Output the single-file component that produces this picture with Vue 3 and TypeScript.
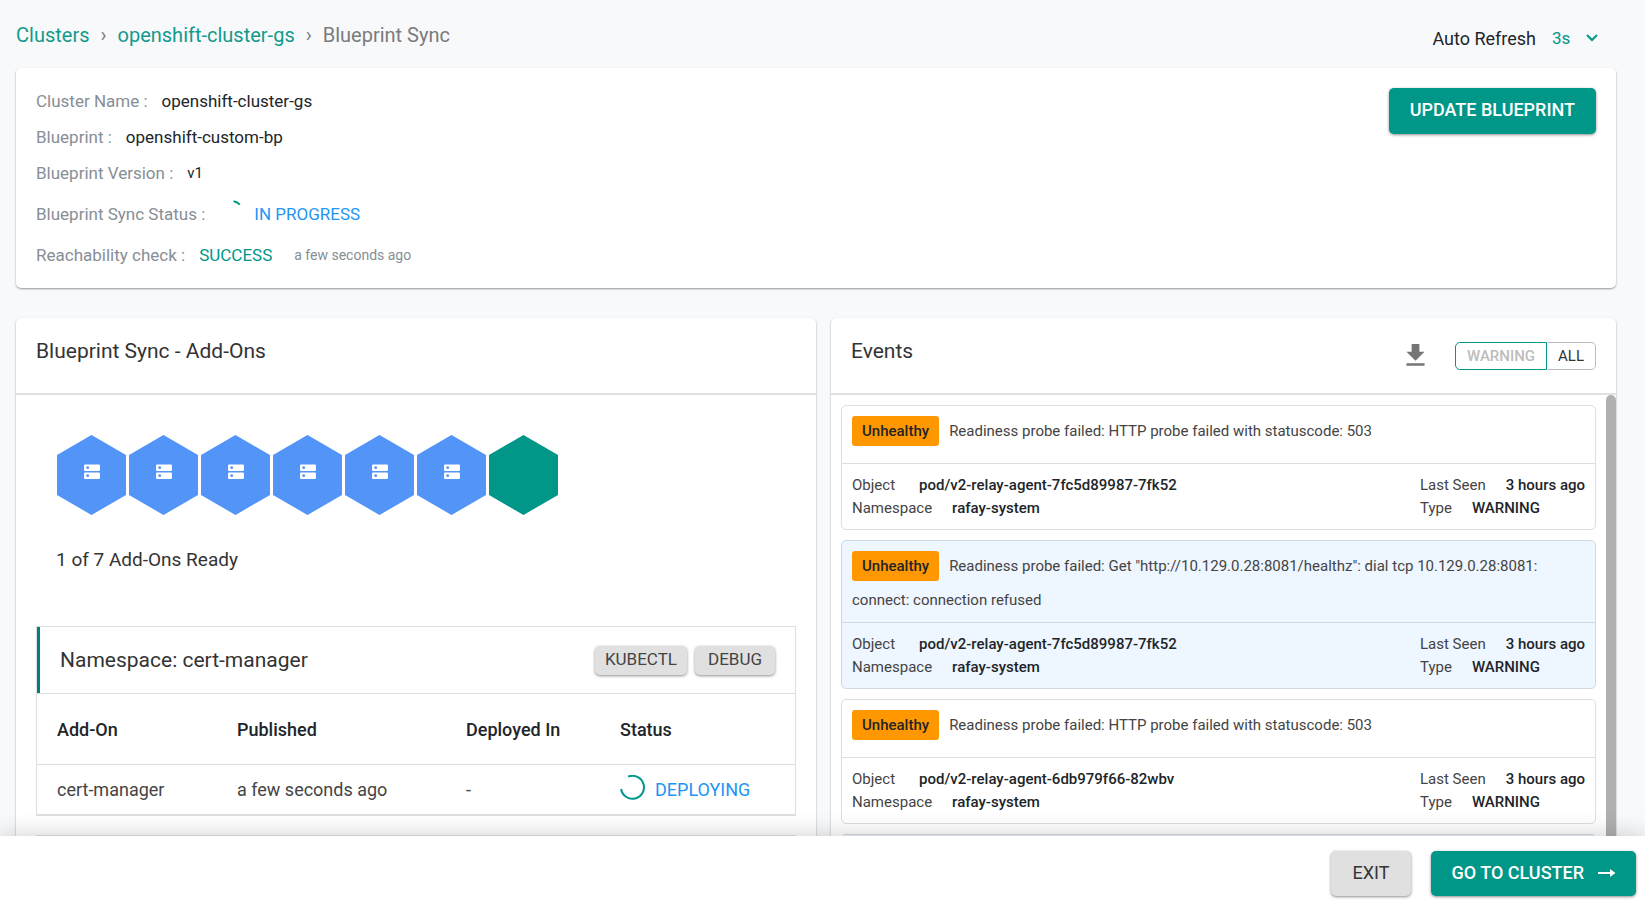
<script setup lang="ts">
import { ref } from 'vue'

interface EventItem {
  reason: string
  message: string
  object: string
  namespace: string
  lastSeen: string
  type: string
}

interface AddOn {
  name: string
  published: string
  deployedIn: string
  status: string
}

const refresh = ref('3s')
const filter = ref<'warning' | 'all'>('warning')

const hexagons: boolean[] = [false, false, false, false, false, false, true]

const addOns: AddOn[] = [
  { name: 'cert-manager', published: 'a few seconds ago', deployedIn: '-', status: 'DEPLOYING' },
]

const probe503 = 'Readiness probe failed: HTTP probe failed with statuscode: 503'
const probeRefused =
  'Readiness probe failed: Get "http://10.129.0.28:8081/healthz": dial tcp 10.129.0.28:8081: connect: connection refused'

const base = { reason: 'Unhealthy', namespace: 'rafay-system', lastSeen: '3 hours ago', type: 'WARNING' }
const events: EventItem[] = [
  { ...base, message: probe503, object: 'pod/v2-relay-agent-7fc5d89987-7fk52' },
  { ...base, message: probeRefused, object: 'pod/v2-relay-agent-7fc5d89987-7fk52' },
  { ...base, message: probe503, object: 'pod/v2-relay-agent-6db979f66-82wbv' },
]
</script>

<template>
  <div class="page">
    <main class="content">
      <header class="topbar">
        <nav class="crumbs" aria-label="Breadcrumb">
          <a href="#clusters">Clusters</a>
          <span class="sep">›</span>
          <a href="#cluster">openshift-cluster-gs</a>
          <span class="sep">›</span>
          <span>Blueprint Sync</span>
        </nav>
        <div class="refresh">
          <label for="refresh">Auto Refresh</label>
          <div class="select">
            <select id="refresh" v-model="refresh">
              <option>3s</option>
              <option>5s</option>
              <option>10s</option>
            </select>
            <svg class="chevron" viewBox="0 0 12 8" aria-hidden="true">
              <path d="M1 1l5 5 5-5" fill="none" stroke="currentColor" stroke-width="2" />
            </svg>
          </div>
        </div>
      </header>

      <section class="card summary">
        <dl class="facts">
          <div class="fact"><dt>Cluster Name :</dt><dd>openshift-cluster-gs</dd></div>
          <div class="fact"><dt>Blueprint :</dt><dd>openshift-custom-bp</dd></div>
          <div class="fact"><dt>Blueprint Version :</dt><dd class="version">v1</dd></div>
          <div class="fact tall">
            <dt>Blueprint Sync Status :</dt>
            <dd class="status">
              <svg class="spinner" viewBox="0 0 25 25" aria-hidden="true">
                <path d="M14.6 1.2A11.5 11.5 0 0 1 20.8 4.6" />
              </svg>
              <span>IN PROGRESS</span>
            </dd>
          </div>
          <div class="fact">
            <dt>Reachability check :</dt>
            <dd class="success">SUCCESS</dd>
            <dd class="ago">a few seconds ago</dd>
          </div>
        </dl>
        <button type="button" class="btn primary">UPDATE BLUEPRINT</button>
      </section>

      <div class="columns">
        <section class="card panel">
          <header class="panel-head"><h2>Blueprint Sync - Add-Ons</h2></header>
          <div class="addons">
            <div class="hexes">
              <svg v-for="(ready, i) in hexagons" :key="i" class="hex" :class="{ ready }" viewBox="0 0 69 80" aria-hidden="true">
                <path d="M34.5 0L69 20v40L34.5 80 0 60V20z" />
                <g v-if="!ready">
                  <rect class="bar" x="27" y="29.5" width="16" height="6.5" rx="1" />
                  <rect class="bar" x="27" y="37.5" width="16" height="6.5" rx="1" />
                  <circle cx="30.7" cy="32.7" r="1.4" />
                  <circle cx="30.7" cy="40.7" r="1.4" />
                </g>
              </svg>
            </div>
            <p class="ready-text">1 of 7 Add-Ons Ready</p>

            <div class="ns">
              <div class="ns-head">
                <h3>Namespace: cert-manager</h3>
                <div class="ns-actions">
                  <button type="button" class="btn small">KUBECTL</button>
                  <button type="button" class="btn small">DEBUG</button>
                </div>
              </div>
              <table>
                <colgroup><col class="c1" /><col class="c2" /><col class="c3" /><col /></colgroup>
                <thead>
                  <tr><th>Add-On</th><th>Published</th><th>Deployed In</th><th>Status</th></tr>
                </thead>
                <tbody>
                  <tr v-for="a in addOns" :key="a.name">
                    <td>{{ a.name }}</td>
                    <td>{{ a.published }}</td>
                    <td>{{ a.deployedIn }}</td>
                    <td>
                      <div class="status">
                        <svg class="spinner" viewBox="0 0 25 25" aria-hidden="true">
                          <path d="M8.2 1.6A11.5 11.5 0 1 1 1.1 14" />
                        </svg>
                        <span>{{ a.status }}</span>
                      </div>
                    </td>
                  </tr>
                </tbody>
              </table>
            </div>
            <div class="ns next"></div>
          </div>
        </section>

        <section class="card panel">
          <header class="panel-head">
            <h2>Events</h2>
            <div class="tools">
              <button type="button" class="download" aria-label="Download events">
                <svg viewBox="0 0 24 24" aria-hidden="true">
                  <path d="M19 9h-4V3H9v6H5l7 7 7-7zM5 18v2h14v-2H5z" />
                </svg>
              </button>
              <div class="toggle" role="group" aria-label="Event filter">
                <button type="button" :class="{ on: filter === 'warning' }" @click="filter = 'warning'">WARNING</button>
                <button type="button" :class="{ on: filter === 'all' }" @click="filter = 'all'">ALL</button>
              </div>
            </div>
          </header>
          <div class="events">
            <div class="list">
              <article v-for="(e, i) in events" :key="i" class="event">
                <p class="message"><span class="tag">{{ e.reason }}</span>{{ e.message }}</p>
                <div class="meta">
                  <dl>
                    <div class="pair"><dt class="wide">Object</dt><dd>{{ e.object }}</dd></div>
                    <div class="pair"><dt>Namespace</dt><dd>{{ e.namespace }}</dd></div>
                  </dl>
                  <dl>
                    <div class="pair"><dt>Last Seen</dt><dd>{{ e.lastSeen }}</dd></div>
                    <div class="pair"><dt>Type</dt><dd>{{ e.type }}</dd></div>
                  </dl>
                </div>
              </article>
              <div class="event next"></div>
            </div>
            <div class="track"><div class="thumb"></div></div>
          </div>
        </section>
      </div>
    </main>

    <footer class="footer">
      <button type="button" class="btn exit">EXIT</button>
      <button type="button" class="btn primary go">
        <span>GO TO CLUSTER</span>
        <svg viewBox="0 0 18 10" aria-hidden="true">
          <path d="M0 4.1h12V1l5.5 4L12 9V5.9H0z" />
        </svg>
      </button>
    </footer>
  </div>
</template>

<style>
body {
  margin: 0;
  background: #f8f9fb;
}
</style>

<style scoped>
* {
  box-sizing: border-box;
}
h2,
h3,
p,
dl,
dd {
  margin: 0;
}
button,
select {
  font: inherit;
  color: inherit;
}
.page {
  display: flex;
  flex-direction: column;
  height: 100vh;
  overflow: hidden;
  font-family: Roboto, 'Liberation Sans', sans-serif;
  font-size: 18px;
  color: #212529;
}
.content {
  flex: 1;
  min-height: 0;
  display: flex;
  flex-direction: column;
  padding: 0 29px 0 16px;
  overflow: hidden;
}
.topbar {
  display: flex;
  justify-content: space-between;
  flex: none;
  height: 68px;
}
.crumbs {
  display: flex;
  align-items: center;
  height: 70px;
  gap: 11px;
  font-size: 20px;
  color: #7b7b7b;
}
.crumbs a {
  color: #139a8c;
  text-decoration: none;
}
.refresh {
  display: flex;
  align-items: center;
  height: 76px;
  gap: 16px;
  padding-right: 18px;
}
.select {
  position: relative;
  display: flex;
  align-items: center;
  color: #009688;
  font-size: 17px;
}
.select select {
  appearance: none;
  width: 46px;
  padding: 0;
  border: 0;
  background: none;
}
.chevron {
  position: absolute;
  right: 0;
  width: 12px;
  height: 8px;
  pointer-events: none;
}
.card {
  background: #fff;
  border-radius: 5px;
  box-shadow: 0 1px 2px rgba(0, 0, 0, 0.4);
}
.summary {
  flex: none;
  display: flex;
  justify-content: space-between;
  align-items: flex-start;
  padding: 15px 20px;
  margin-bottom: 30px;
}
.summary .btn {
  margin-top: 5px;
}
.fact {
  display: flex;
  align-items: center;
  gap: 14px;
  height: 36px;
  font-size: 17px;
}
.fact.tall {
  height: 46px;
}
.fact dt {
  color: #868e96;
}
.fact .version {
  font-size: 15px;
}
.fact .success {
  color: #009688;
}
.fact .ago {
  margin-left: 8px;
  font-size: 14px;
  color: #868e96;
}
.status {
  display: flex;
  align-items: center;
  gap: 10px;
  color: #2196f3;
}
.spinner {
  width: 25px;
  height: 25px;
  margin-bottom: 4px;
  fill: none;
  stroke: #009688;
  stroke-width: 2;
}
.btn {
  display: inline-flex;
  align-items: center;
  justify-content: center;
  border: 0;
  border-radius: 5px;
  background: #e0e0e0;
  box-shadow: 0 1px 3px rgba(0, 0, 0, 0.45);
}
.btn.primary {
  height: 46px;
  padding: 0 21px 4px;
  background: #009688;
  color: #fff;
  font-weight: 500;
}
.columns {
  flex: 1;
  min-height: 0;
  display: grid;
  grid-template-columns: 800fr 785fr;
  gap: 15px;
}
.panel {
  display: flex;
  flex-direction: column;
  min-height: 0;
  min-width: 0;
  border-radius: 5px 5px 0 0;
}
.panel-head {
  flex: none;
  display: flex;
  justify-content: space-between;
  height: 77px;
  padding: 0 20px;
  border-bottom: 2px solid #e0e0e0;
}
h2,
h3 {
  font-size: 21px;
  font-weight: 400;
  color: #333;
}
h2 {
  line-height: 66px;
}
.addons {
  flex: 1;
  min-height: 0;
  overflow: hidden;
  padding: 40px 20px 0;
}
.hexes {
  display: flex;
  gap: 3px;
  padding-left: 21px;
}
.hex {
  width: 69px;
  height: 80px;
  fill: #5295f7;
}
.hex.ready {
  fill: #009688;
}
.hex .bar {
  fill: #fff;
}
.ready-text {
  margin: 34px 0 56px 20px;
  font-size: 19px;
  line-height: 21px;
  color: #333;
}
.ns {
  margin-bottom: 19px;
  border: 1px solid #dedede;
  border-bottom-width: 2px;
}
.ns.next {
  height: 66px;
}
.ns-head {
  display: flex;
  justify-content: space-between;
  align-items: center;
  height: 66px;
  padding: 0 20px;
  border-left: 3px solid #008080;
}
.ns-actions {
  display: flex;
  gap: 8px;
}
.btn.small {
  height: 29px;
  padding: 0 10px 2px;
  font-size: 17px;
  color: #444;
}
.btn.small + .btn.small {
  padding: 0 13px 2px;
}
table {
  width: 100%;
  table-layout: fixed;
  border-collapse: collapse;
}
.c1 {
  width: 200px;
}
.c2 {
  width: 229px;
}
.c3 {
  width: 154px;
}
th,
td {
  padding: 0;
  border-top: 1px solid #dedede;
  text-align: left;
  color: #212529;
}
th {
  height: 71px;
  font-weight: 500;
}
td {
  height: 49px;
  color: #444;
}
th:first-child,
td:first-child {
  padding-left: 20px;
}
.tools {
  display: flex;
  align-items: center;
  gap: 24px;
}
.download {
  display: flex;
  padding: 0;
  border: 0;
  background: none;
}
.download svg {
  width: 31px;
  height: 31px;
  fill: #757575;
}
.toggle {
  display: flex;
}
.toggle button {
  height: 28px;
  padding: 0 11px;
  border: 1px solid #bdbdbd;
  border-left: 0;
  border-radius: 0 5px 5px 0;
  background: #fff;
  font-size: 15px;
  color: #333;
}
.toggle button:first-child {
  border-left: 1px solid #bdbdbd;
  border-radius: 5px 0 0 5px;
}
.toggle .on {
  color: #bdbdbd;
  font-weight: 500;
}
.toggle button.on,
.toggle .on:first-child {
  border-color: #009688;
}
.events {
  flex: 1;
  min-height: 0;
  display: flex;
  overflow: hidden;
}
.list {
  flex: 1;
  min-width: 0;
  display: flex;
  flex-direction: column;
  gap: 10px;
  padding: 10px;
}
.track {
  flex: none;
  width: 10px;
}
.thumb {
  height: 100%;
  border-radius: 5px 5px 0 0;
  background: #b0b0b0;
}
.event {
  flex: none;
  border: 1px solid #dedede;
  border-radius: 5px;
  font-size: 15px;
  color: #444;
}
.event:nth-child(even) {
  border-color: #d0d9e2;
  background: #eef6ff;
}
.event.next {
  height: 60px;
}
.message {
  padding: 10px;
  line-height: 24px;
}
.tag {
  display: inline-block;
  height: 30px;
  margin: 0 10px 7px 0;
  padding: 0 10px;
  border-radius: 3px;
  background: #ff9800;
  color: #212529;
  font-weight: 500;
  line-height: 30px;
}
.meta {
  display: flex;
  justify-content: space-between;
  padding: 10px 10px 9px;
  border-top: 1px solid #dedede;
}
.event:nth-child(even) .meta {
  border-color: #d0d9e2;
}
.pair {
  display: flex;
  gap: 20px;
  line-height: 23px;
}
.pair .wide {
  margin-right: 4px;
}
.pair dd {
  font-weight: 500;
  color: #212529;
}
.footer {
  position: relative;
  flex: none;
  display: flex;
  justify-content: flex-end;
  gap: 20px;
  height: 68px;
  padding: 15px 9px 0 0;
  background: #fff;
  box-shadow: 0 0 24px rgba(0, 0, 0, 0.2);
}
.btn.exit {
  height: 45px;
  padding: 0 22px 2px;
  color: #333;
}
.btn.go {
  height: 45px;
  gap: 14px;
  padding: 0 20px 2px;
}
.go svg {
  width: 18px;
  height: 10px;
  fill: #fff;
}
</style>
